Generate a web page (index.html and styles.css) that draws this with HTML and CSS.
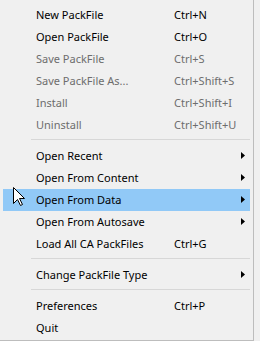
FILE: index.html
```html
<!DOCTYPE html>
<html lang="en">
<head>
    <meta charset="UTF-8">
    <title>PackFile menu</title>
    <link rel="stylesheet" href="styles.css">
</head>
<body>
    <div class="menu">
        <div class="item"><span class="label">New PackFile</span><span class="shortcut">Ctrl+N</span></div>
        <div class="item"><span class="label">Open PackFile</span><span class="shortcut">Ctrl+O</span></div>
        <div class="item disabled"><span class="label">Save PackFile</span><span class="shortcut">Ctrl+S</span></div>
        <div class="item disabled"><span class="label">Save PackFile As...</span><span class="shortcut">Ctrl+Shift+S</span></div>
        <div class="item disabled"><span class="label">Install</span><span class="shortcut">Ctrl+Shift+I</span></div>
        <div class="item disabled"><span class="label">Uninstall</span><span class="shortcut">Ctrl+Shift+U</span></div>
        <div class="separator"></div>
        <div class="item sub"><span class="label">Open Recent</span><span class="shortcut"></span><svg class="arrow" viewBox="0 0 4 7"><path d="M0 0L4 3.5L0 7Z"/></svg></div>
        <div class="item sub"><span class="label">Open From Content</span><span class="shortcut"></span><svg class="arrow" viewBox="0 0 4 7"><path d="M0 0L4 3.5L0 7Z"/></svg></div>
        <div class="item sub active"><span class="label">Open From Data</span><span class="shortcut"></span><svg class="arrow" viewBox="0 0 4 7"><path d="M0 0L4 3.5L0 7Z"/></svg></div>
        <div class="item sub"><span class="label">Open From Autosave</span><span class="shortcut"></span><svg class="arrow" viewBox="0 0 4 7"><path d="M0 0L4 3.5L0 7Z"/></svg></div>
        <div class="item"><span class="label">Load All CA PackFiles</span><span class="shortcut">Ctrl+G</span></div>
        <div class="separator"></div>
        <div class="item sub"><span class="label">Change PackFile Type</span><span class="shortcut"></span><svg class="arrow" viewBox="0 0 4 7"><path d="M0 0L4 3.5L0 7Z"/></svg></div>
        <div class="separator"></div>
        <div class="item"><span class="label">Preferences</span><span class="shortcut">Ctrl+P</span></div>
        <div class="item"><span class="label">Quit</span><span class="shortcut"></span></div>
    </div>

    <!-- mouse pointer over the menu -->
    <svg class="cursor" width="13" height="20" viewBox="0 0 13 20">
        <path d="M0.5 0.5L0.5 16.5L4.5 12.5L7.5 18.5L9.5 17.5L6.5 11.5L11.5 11.5Z" fill="#fff" stroke="#000" stroke-width="1" stroke-linejoin="miter"/>
    </svg>
</body>
</html>
```

FILE: styles.css
```css
:root {
    --menu-bg: #f0f0f0;
    --border-color: #bdbdbd;
    --sep-color: #d7d7d7;
    --text-color: #000000;
    --disabled-color: #6d6d6d;
    --hover-bg: #91c9f7;
}

* { box-sizing: border-box; margin: 0; padding: 0; }

body {
    font-family: "Noto Sans", "Open Sans", sans-serif;
    font-size: 11px;
    background-color: var(--menu-bg);
    color: var(--text-color);
    width: 260px;
    height: 341px;
    overflow: hidden;
    position: relative;
}

.menu {
    width: 254px;
    height: 341px;
    padding-top: 4px;
    background-color: var(--menu-bg);
    border-right: 1px solid var(--border-color);
    border-bottom: 1px solid var(--border-color);
}

.item {
    display: flex;
    align-items: center;
    height: 22px;
    margin: 0 3px;
    padding-left: 33px;
    padding-bottom: 1px;
    white-space: nowrap;
}

.item .label { width: 138px; }
.item .shortcut { flex: 1; }
.item .arrow { width: 4px; height: 7px; margin-right: 5px; fill: #000; }

.item.disabled { color: var(--disabled-color); }
.item.active { background-color: var(--hover-bg); }

.separator {
    height: 1px;
    margin: 3px 3px 5px 31px;
    background-color: var(--sep-color);
}

.cursor {
    position: absolute;
    left: 13px;
    top: 187px;
}
```
